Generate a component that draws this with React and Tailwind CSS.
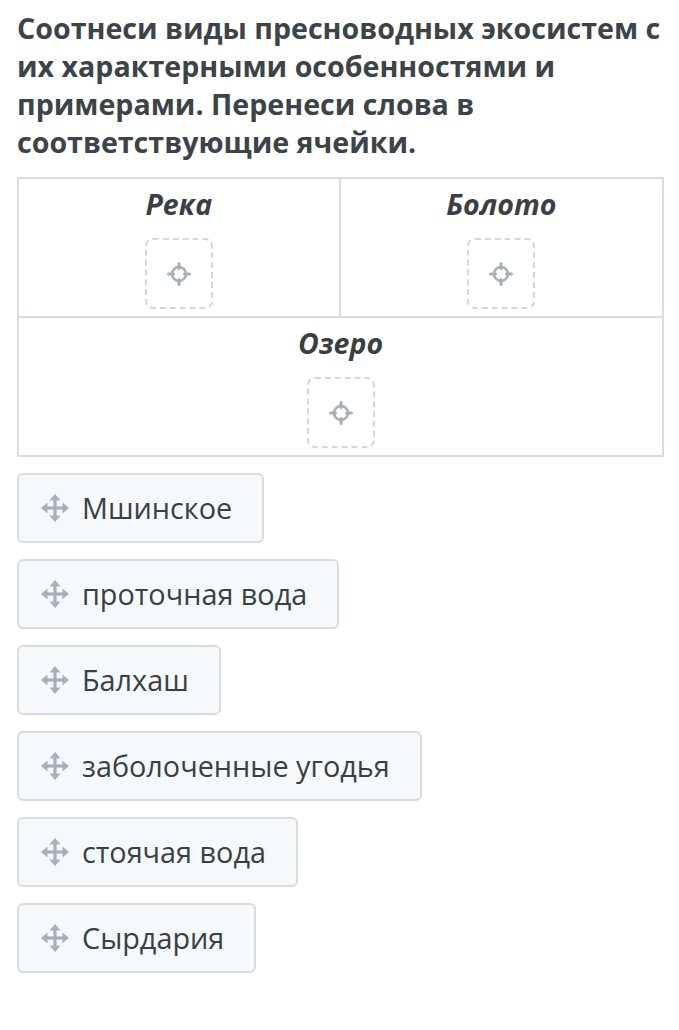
import React from "react";

const cells = [
  { title: "Река" },
  { title: "Болото" },
];

const chips = [
  "Мшинское",
  "проточная вода",
  "Балхаш",
  "заболоченные угодья",
  "стоячая вода",
  "Сырдария",
];

function TargetIcon() {
  return (
    <svg width="26" height="26" viewBox="0 0 26 26" fill="none">
      <circle cx="13" cy="13" r="7" stroke="#a4b1bb" strokeWidth="2.6" />
      <path d="M13 2.5v5M13 18.5v5M2.5 13h5M18.5 13h5" stroke="#a4b1bb" strokeWidth="3" strokeLinecap="round" />
    </svg>
  );
}

function MoveIcon() {
  return (
    <svg width="30" height="30" viewBox="0 0 30 30" fill="#a4b1bb">
      <rect x="13.4" y="6" width="3.2" height="18" />
      <rect x="6" y="13.4" width="18" height="3.2" />
      <path d="M15 1l5.5 6.5h-11z" />
      <path d="M15 29l5.5-6.5h-11z" />
      <path d="M1 15l6.5-5.5v11z" />
      <path d="M29 15l-6.5-5.5v11z" />
    </svg>
  );
}

function DropZone() {
  return (
    <div className="w-[68px] h-[71px] rounded-lg border-2 border-dashed border-[#d3d8dc] flex items-center justify-center">
      <TargetIcon />
    </div>
  );
}

function Cell({ title, className = "" }) {
  return (
    <div className={`flex flex-col items-center pt-[6px] pb-[7px] ${className}`}>
      <div className="text-[28.5px] leading-[38px] font-bold italic text-[#3a3f44]">{title}</div>
      <div className="mt-[15px]">
        <DropZone />
      </div>
    </div>
  );
}

export default function App() {
  return (
    <div className="bg-white min-h-[1030px] px-[17px] pt-[9px] pb-10 text-[#3d4449]" style={{ fontFamily: '"Open Sans", "Noto Sans", sans-serif' }}>
      <h1 className="text-[28.6px] leading-[38px] font-bold -mr-[14px]">
        Соотнеси виды пресноводных экосистем с их характерными особенностями и примерами. Перенеси слова в соответствующие ячейки.
      </h1>

      <div className="mt-[16px] w-[647px] border-2 border-[#d8dedf]">
        <div className="grid grid-cols-2">
          {cells.map((c, i) => (
            <Cell key={c.title} title={c.title} className={i === 0 ? "border-r-2 border-[#d8dedf]" : ""} />
          ))}
        </div>
        <Cell title="Озеро" className="border-t-2 border-[#d8dedf]" />
      </div>

      <div className="mt-[16px] flex flex-col items-start gap-[16px]">
        {chips.map((t) => (
          <div key={t} className="h-[70px] flex items-center rounded-md border-2 border-[#d6dce0] bg-[#f5f9fc] pl-[21px] pr-[30px]">
            <MoveIcon />
            <span className="ml-[12px] text-[28.8px] text-[#3a3f44]">{t}</span>
          </div>
        ))}
      </div>
    </div>
  );
}
